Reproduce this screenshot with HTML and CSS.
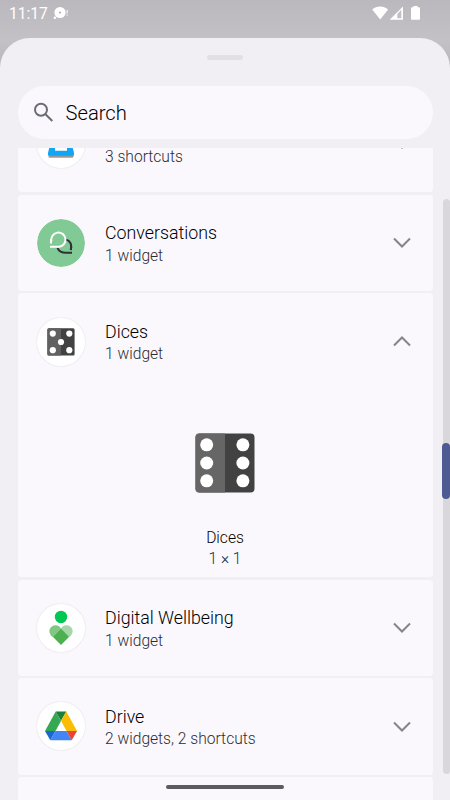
FILE: index.html
```html
<!DOCTYPE html>
<html lang="en">
<head>
    <meta charset="UTF-8">
    <meta name="viewport" content="width=device-width, initial-scale=1.0">
    <title>Widgets</title>
    <link rel="stylesheet" href="styles.css">
</head>
<body>
    <div class="screen">
        <header class="status-bar">
            <span class="time">11:17</span>
            <svg class="notif" width="16" height="14" viewBox="0 0 16 14">
                <circle cx="7" cy="6.500" r="5.600" fill="#fff"/>
                <circle cx="7" cy="6.500" r="1" fill="#aaa9ad"/>
                <circle cx="1.900" cy="11.700" r="1.300" fill="#fff"/>
                <path d="M13.500 4h1.300v3.500h-1.300zM13.500 8.500h1.300v1.300h-1.300z" fill="#fff" opacity=".75"/>
            </svg>
            <svg class="signals" width="50" height="16" viewBox="0 0 50 16">
                <path d="M.2 3.400C4.500-.6 11.800-.6 16.100 3.400L8.200 13.500z" fill="#fff"/>
                <path d="M31 .5v13.300H17.700z" fill="#fff"/>
                <path d="M25.300 8l4-4.200v8.400h-4z" fill="#c2c0c5"/>
                <path d="M41.500 0h4v1.300h1.500q1 0 1 1v10.500q0 1-1 1h-7q-1 0-1-1V2.300q0-1 1-1h1.500z" fill="#fff"/>
            </svg>
        </header>

        <main class="sheet">
            <div class="handle"></div>
            <div class="search">
                <svg width="22" height="22" viewBox="0 0 22 22" fill="none" stroke="#6c6c74" stroke-width="2">
                    <circle cx="8" cy="7.700" r="6"/>
                    <path d="M12.300 12l7 7"/>
                </svg>
                <span>Search</span>
            </div>

            <div class="list">
                <section class="card">
                    <div class="row">
                        <svg class="icon shadow" viewBox="0 0 48 48">
                            <circle cx="24" cy="24" r="24" fill="#fff"/>
                            <path d="M12 29h24l.5 7.500q0 1.300-1.500 1.300H13q-1.500 0-1.500-1.300z" fill="#999"/>
                            <path d="M13 25h22l2 8v1.500q0 1.300-1.500 1.300h-23q-1.500 0-1.500-1.300V33z" fill="#12a5f4"/>
                            <path d="M18 24h12v6.700H18z" fill="#fff"/>
                        </svg>
                        <div class="info">
                            <h2>&nbsp;</h2>
                            <p>3 shortcuts</p>
                        </div>
                        <svg class="chevron" viewBox="0 0 20 12"><path d="M2 1.500l8 8 8-8"/></svg>
                    </div>
                </section>

                <section class="card">
                    <div class="row">
                        <svg class="icon" viewBox="0 0 48 48">
                            <circle cx="24" cy="24" r="24" fill="#81c995"/>
                            <g fill="none" stroke-width="2">
                                <path d="M29 20.500c4.500 1.200 6.500 6 4.500 10.500M35 33.800h-6c-4.500 0-7.300-2-8.500-5" stroke="#2e3136"/>
                                <path d="M34 25v6" stroke="#2e3136"/>
                                <path d="M13 27.700h9a7.100 7.100 0 1 0-7.500-5.500" stroke="#fff"/>
                                <path d="M14 20v4.500" stroke="#fff"/>
                            </g>
                        </svg>
                        <div class="info">
                            <h2>Conversations</h2>
                            <p>1 widget</p>
                        </div>
                        <svg class="chevron" viewBox="0 0 20 12"><path d="M2 1.500l8 8 8-8"/></svg>
                    </div>
                </section>

                <section class="card expanded">
                    <div class="row">
                        <svg class="icon shadow" viewBox="0 0 48 48">
                            <circle cx="24" cy="24" r="24" fill="#fff"/>
                            <rect x="10.400" y="10.300" width="27.200" height="27.200" rx="1.500" fill="#424242"/>
                            <path d="M24 10.300H11.900q-1.500 0-1.500 1.500V36q0 1.500 1.500 1.500H24z" fill="#616161"/>
                            <g fill="#fff">
                                <circle cx="15.800" cy="15.600" r="3.100"/>
                                <circle cx="32.300" cy="15.600" r="3.100"/>
                                <circle cx="24" cy="24" r="3.100"/>
                                <circle cx="15.800" cy="32.200" r="3.100"/>
                                <circle cx="32.300" cy="32.200" r="3.100"/>
                            </g>
                        </svg>
                        <div class="info">
                            <h2>Dices</h2>
                            <p>1 widget</p>
                        </div>
                        <svg class="chevron" viewBox="0 0 20 12"><path d="M2 9.500l8-8 8 8"/></svg>
                    </div>
                    <div class="preview">
                        <svg width="60" height="60" viewBox="0 0 60 60">
                            <rect x=".5" y=".5" width="59" height="59" rx="4" fill="#424242"/>
                            <path d="M30 .5H4.500q-4 0-4 4v51q0 4 4 4H30z" fill="#666"/>
                            <g fill="#fff">
                                <circle cx="11.700" cy="11.800" r="6.500"/>
                                <circle cx="11.700" cy="30" r="6.500"/>
                                <circle cx="11.700" cy="47.800" r="6.500"/>
                                <circle cx="47.900" cy="11.800" r="6.500"/>
                                <circle cx="47.900" cy="30" r="6.500"/>
                                <circle cx="47.900" cy="47.800" r="6.500"/>
                            </g>
                        </svg>
                        <h3>Dices</h3>
                        <p>1 × 1</p>
                    </div>
                </section>

                <section class="card">
                    <div class="row">
                        <svg class="icon shadow" viewBox="0 0 48 48">
                            <circle cx="24" cy="24" r="24" fill="#fff"/>
                            <circle cx="24" cy="13" r="6.200" fill="#00c853"/>
                            <path d="M24 24.500l-8.500 8.500-1.700-1.800a6.100 6.100 0 0 1 8.600-8.600z" fill="#81c784"/>
                            <path d="M24 24.500l8.500 8.500 1.700-1.800a6.100 6.100 0 0 0-8.600-8.600z" fill="#a5d6a7"/>
                            <path d="M24 24.500l8.200 8.200L24 41l-8.200-8.300z" fill="#4caf50"/>
                        </svg>
                        <div class="info">
                            <h2>Digital Wellbeing</h2>
                            <p>1 widget</p>
                        </div>
                        <svg class="chevron" viewBox="0 0 20 12"><path d="M2 1.500l8 8 8-8"/></svg>
                    </div>
                </section>

                <section class="card">
                    <div class="row">
                        <svg class="icon shadow" viewBox="0 0 48 48">
                            <circle cx="24" cy="24" r="24" fill="#fff"/>
                            <path d="M18.700 9.500L8 29h10.500L24 19z" fill="#34a853"/>
                            <path d="M18.700 9.500h10.600L24 18.800z" fill="#188038"/>
                            <path d="M29.300 9.500L40 29H29.500L24 18.800z" fill="#fbbc04"/>
                            <path d="M8 29h10.500l-5.200 9.200z" fill="#1967d2"/>
                            <path d="M18.500 29h11l5.200 9.200H13.300z" fill="#4285f4"/>
                            <path d="M29.500 29H40l-5.300 9.200z" fill="#ea4335"/>
                        </svg>
                        <div class="info">
                            <h2>Drive</h2>
                            <p>2 widgets, 2 shortcuts</p>
                        </div>
                        <svg class="chevron" viewBox="0 0 20 12"><path d="M2 1.500l8 8 8-8"/></svg>
                    </div>
                </section>

                <section class="card"><div class="row"></div></section>
            </div>
        </main>

        <div class="scroll-track"></div>
        <div class="scroll-thumb"></div>
        <div class="nav-pill"></div>
    </div>
</body>
</html>
```
FILE: styles.css
```css
* {
    box-sizing: border-box;
}
body {
    margin: 0;
    font-family: Roboto, sans-serif;
    font-weight: 350;
    color: #000;
}
h2, h3, p {
    margin: 0;
    font-weight: 350;
}
.screen {
    position: relative;
    display: flex;
    flex-direction: column;
    height: 800px;
    overflow: hidden;
    background: linear-gradient(#bab8bd, #c3c1c6 40px, #b9b8bd 66px);
}
.status-bar {
    display: flex;
    flex: none;
    height: 38px;
    padding: 6px 28px 0 9px;
}
.time {
    color: #fff;
    font-size: 15.6px;
    font-weight: 400;
    line-height: 16px;
}
.notif {
    margin-left: 5.500px;
}
.signals {
    margin-left: auto;
}
.sheet {
    display: flex;
    flex: 1;
    flex-direction: column;
    min-height: 0;
    padding: 17px 17.500px 0;
    border-radius: 30px 30px 0 0;
    background: #f1eff4;
}
.handle {
    flex: none;
    align-self: center;
    width: 36px;
    height: 5px;
    border-radius: 3px;
    background: #e2e0e5;
}
.search {
    display: flex;
    flex: none;
    align-items: center;
    gap: 10.500px;
    height: 53px;
    margin: 26px 0 9px;
    padding-left: 15.500px;
    border-radius: 27px;
    background: #faf8fd;
    font-size: 20.200px;
}
.list {
    display: flex;
    flex: 1;
    flex-direction: column;
    gap: 2.300px;
    min-height: 0;
    overflow: hidden;
}
.card {
    flex: none;
    border-radius: 4px;
    background: #faf8fd;
}
.card:first-child {
    margin-top: -52px;
}
.expanded {
    height: 283.900px;
}
.row {
    display: flex;
    align-items: center;
    height: 96.400px;
    padding: 0 21px 0 19.500px;
}
.icon {
    width: 48px;
    height: 48px;
    border-radius: 50%;
}
.shadow {
    box-shadow: 0 0 2px rgba(0, 0, 0, 0.14);
}
.info {
    flex: 1;
    margin-left: 20px;
    padding-top: 3px;
}
.info h2 {
    font-size: 17.800px;
    line-height: 22.500px;
}
.info p {
    color: #2c2c31;
    font-size: 15.600px;
    line-height: 22px;
}
.chevron {
    width: 20px;
    height: 12px;
    margin-top: 0.5px;
    fill: none;
    stroke: #85848a;
    stroke-width: 2;
}
.preview {
    display: flex;
    flex-direction: column;
    align-items: center;
    padding-top: 42.800px;
}
.preview h3 {
    margin-top: 35px;
    font-size: 15.600px;
    line-height: 21px;
}
.preview p {
    color: #2c2c31;
    font-size: 15.600px;
    line-height: 21px;
}
/* overlays on top of the sheet */
.scroll-track {
    position: absolute;
    top: 199px;
    right: 0;
    width: 7px;
    height: 575px;
    border-radius: 4px;
    background: #d9d7dc;
}
.scroll-thumb {
    position: absolute;
    top: 443px;
    right: 0;
    width: 8px;
    height: 56px;
    border-radius: 4px;
    background: #4e5b92;
}
.nav-pill {
    position: absolute;
    bottom: 11px;
    left: 166px;
    width: 118px;
    height: 4.500px;
    border-radius: 3px;
    background: #5c5b60;
}
```
